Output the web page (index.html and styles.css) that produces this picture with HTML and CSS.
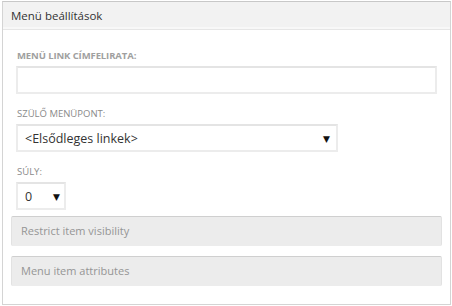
FILE: index.html
```html
<!DOCTYPE html>
<html>
<head>
<meta charset="utf-8">
<link rel="stylesheet" href="styles.css">
</head>
<body>
<div class="panel">
  <div class="panel-head">Menü beállítások</div>
  <div class="panel-body">
    <div class="field">
      <div class="label label-bold">MENÜ LINK CÍMFELIRATA:</div>
      <div class="input wide"></div>
    </div>
    <div class="field">
      <div class="label">SZÜLŐ MENÜPONT:</div>
      <div class="input select medium"><span>&lt;Elsődleges linkek&gt;</span><span class="arrow">▼</span></div>
    </div>
    <div class="field">
      <div class="label">SÚLY:</div>
      <div class="input select small"><span>0</span><span class="arrow">▼</span></div>
    </div>
    <div class="fieldset">Restrict item visibility</div>
    <div class="fieldset">Menu item attributes</div>
  </div>
</div>
</body>
</html>
```
FILE: styles.css
```css
html, body { margin: 0; padding: 0; background: #fff; }
body { padding: 1px 1px 0 2px; font-family: "Open Sans", "DejaVu Sans", sans-serif; }
.panel {
  border: 1px solid #d4d4d4;
  border-top-color: #c8c8c8;
  height: 304px;
  box-sizing: border-box;
  display: flex;
  flex-direction: column;
}
.panel-head {
  height: 27px;
  background: #f2f2f2;
  border-bottom: 1px solid #e6e6e6;
  box-shadow: inset 0 -2px 0 #f8f8f8;
  font-size: 11.5px;
  color: #333;
  padding-left: 8px;
  line-height: 27px;
}
.panel-body {
  padding: 20px 8px 0 8px;
  display: flex;
  flex-direction: column;
}
.field { padding-left: 5px; display: flex; flex-direction: column; }
.label {
  font-size: 9.5px;
  color: #8a8a8a;
  letter-spacing: 0;
  height: 11px;
  line-height: 11px;
  padding-left: 1px;
  margin-bottom: 5px;
}
.label-bold { font-weight: bold; color: #a0a0a0; letter-spacing: -0.1px; }
.input {
  box-sizing: border-box;
  height: 28px;
  border: 2px solid #ececec;
  border-top-color: #e4e4e4;
  background: #fff;
  margin-bottom: 14px;
}
.wide { width: 421px; }
.select {
  display: flex;
  align-items: center;
  justify-content: space-between;
  padding: 0 6px 0 7px;
  font-size: 12.5px;
  color: #333;
}
.medium { width: 322px; }
.small { width: 50px; margin-bottom: 6px; padding-right: 4px; }
.arrow { font-size: 9px; color: #111; }
.fieldset {
  box-sizing: border-box;
  height: 30px;
  background: #ececec;
  border-top: 1px solid #cfcfcf;
  border-left: 1px solid #e2e2e2;
  border-right: 1px solid #e2e2e2;
  width: 431px;
  padding-left: 9px;
  line-height: 28px;
  font-size: 11px;
  color: #959595;
  margin-bottom: 10px;
  border-radius: 2px;
}
```
